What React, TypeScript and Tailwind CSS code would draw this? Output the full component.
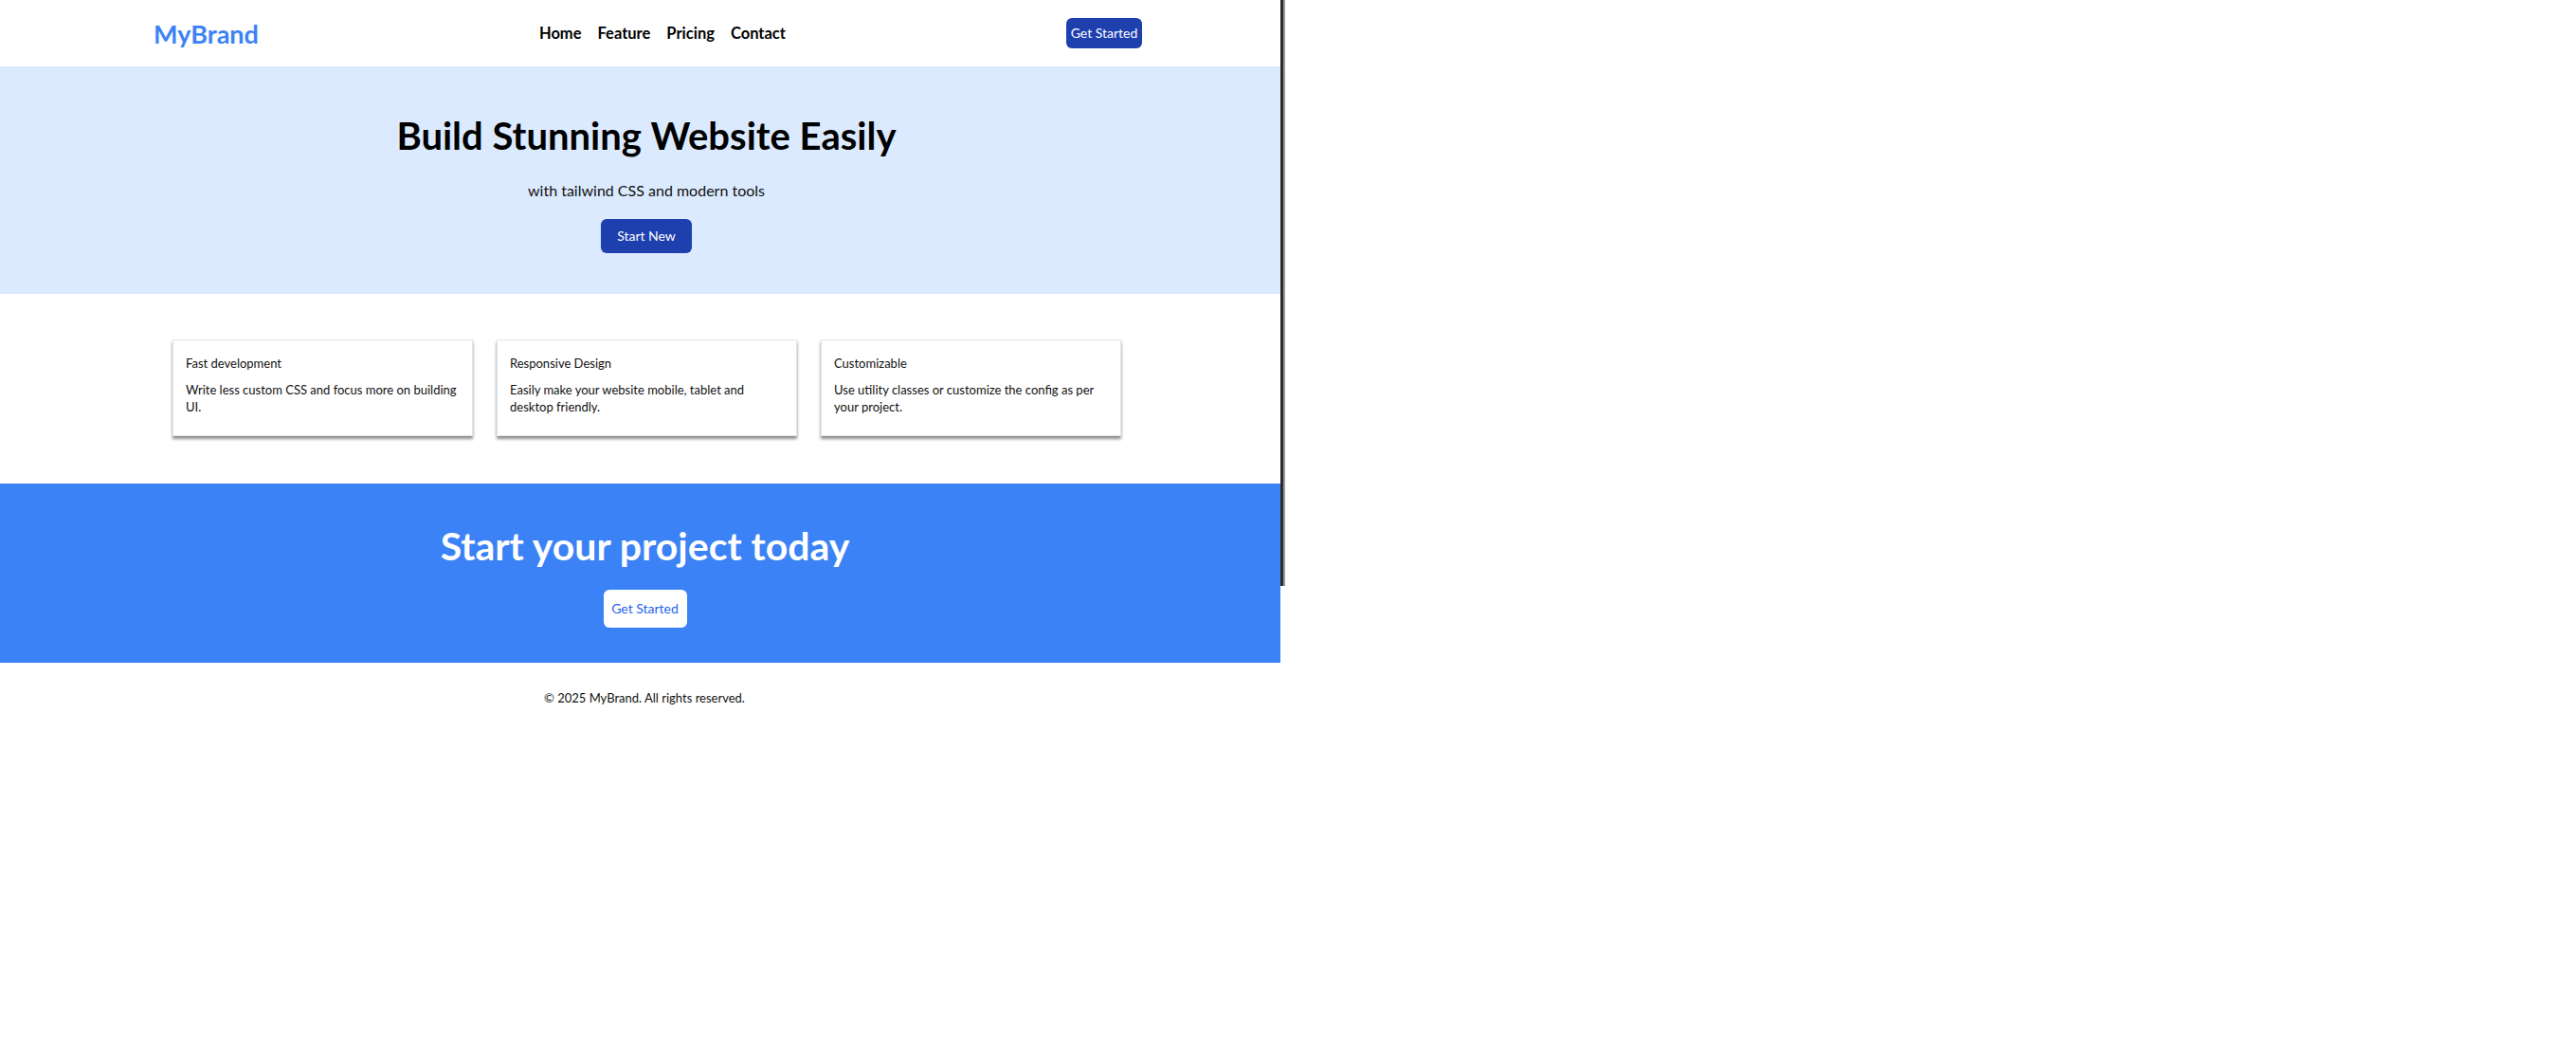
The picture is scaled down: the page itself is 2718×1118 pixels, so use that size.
import React from "react";

const font = { fontFamily: "Lato, 'Open Sans', sans-serif" };

function Card({ title, body }: { title: string; body: string }) {
  return (
    <div className="h-[102px] border border-[#e5e5e5] bg-white pl-[13px] pr-[12px] pt-[15px] shadow-[0_3px_3px_rgba(0,0,0,0.45)]">
      <div className="text-[13px] leading-[18px] text-[#111]">{title}</div>
      <p className="mt-[10px] text-[13px] leading-[18px] text-[#111]">{body}</p>
    </div>
  );
}

export default function App() {
  return (
    <div className="relative min-h-[1118px] w-full bg-white" style={font}>
      <div className="w-[1351px]">
        <nav className="flex h-[70px] items-center bg-white">
          <div className="ml-[162px] flex w-[1043px] items-center justify-between">
            <div className="text-[27px] font-bold leading-none text-[#3b82f6]">MyBrand</div>
            <ul className="flex gap-[17px] text-[16.5px] font-bold text-black">
              <li>Home</li>
              <li>Feature</li>
              <li>Pricing</li>
              <li>Contact</li>
            </ul>
            <button className="h-[32px] w-[80px] rounded-md bg-[#1e40af] text-sm text-white">Get Started</button>
          </div>
        </nav>

        <section className="flex h-[240px] flex-col items-center bg-[#dbeafe] pl-[13px] pt-[53px]">
          <h1 className="text-[40px] font-bold leading-[40px] text-black">Build Stunning Website Easily</h1>
          <p className="mt-[26px] text-base leading-6 text-[#111]">with tailwind CSS and modern tools</p>
          <button className="mt-[18px] h-[36px] w-[96px] rounded-md bg-[#1e40af] text-sm text-white">Start New</button>
        </section>

        <section className="h-[200px] bg-white pt-12">
          <div className="ml-[182px] grid w-[1001px] grid-cols-3 gap-[25px]">
            <Card title="Fast development" body="Write less custom CSS and focus more on building UI." />
            <Card title="Responsive Design" body="Easily make your website mobile, tablet and desktop friendly." />
            <Card title="Customizable" body="Use utility classes or customize the config as per your project." />
          </div>
        </section>

        <section className="flex h-[189px] flex-col items-center bg-[#3b82f6] pl-[10px] pt-[42px]">
          <h2 className="text-[41px] font-bold leading-[48px] text-white">Start your project today</h2>
          <button className="mt-[22px] h-[40px] w-[88px] rounded-md bg-white text-sm text-[#2563eb]">Get Started</button>
        </section>

        <footer className="flex flex-col items-center pl-[9px] pt-[28px]">
          <p className="text-[13px] leading-[18px] text-[#111]">© 2025 MyBrand. All rights reserved.</p>
        </footer>
      </div>

      <div className="absolute left-[1351px] top-0 h-[618px] w-[5px] border-r-2 border-[#9a9a9a] bg-[#2b2b2b]" />
    </div>
  );
}
